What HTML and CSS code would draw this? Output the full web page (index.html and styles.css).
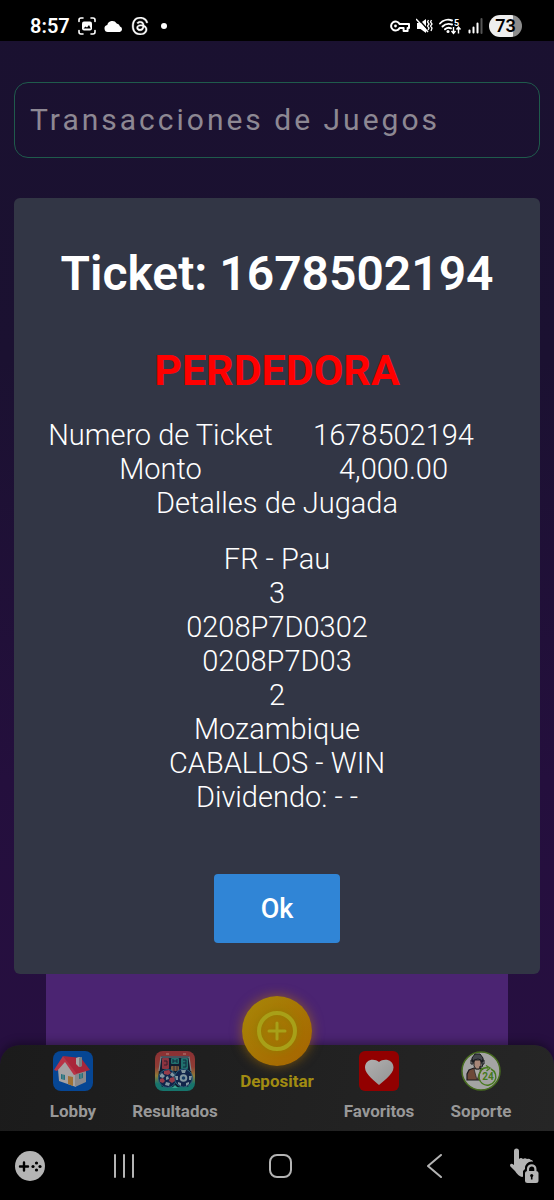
FILE: index.html
```html
<!DOCTYPE html>
<html lang="es">
<head>
  <meta charset="UTF-8" />
  <meta name="viewport" content="width=device-width, initial-scale=1.0"/>
  <title>Transacciones de Juegos</title>
  <link rel="stylesheet" href="styles.css">
</head>
<body>
  <!-- Barra de estado -->
  <header class="status-bar">
    <div class="status-left">
      <span class="time">8:57</span>
      <svg width="18" height="18" viewBox="0 0 18 18" fill="none" stroke="#fff" stroke-width="1.600" stroke-linecap="round" aria-hidden="true">
        <path d="M1 4.500V3a2 2 0 0 1 2-2h2M13 1h2a2 2 0 0 1 2 2v1.500M17 13.500v1.500a2 2 0 0 1-2 2h-2M5 17H3a2 2 0 0 1-2-2v-1.500"/>
        <rect x="4" y="4.500" width="10" height="9" rx="2" fill="#fff" stroke="none"/>
        <path d="M5.500 11.500l2-2 1.500 1 2-2.500 1.800 3.500z" fill="#000" stroke="none"/>
      </svg>
      <svg width="19" height="12" viewBox="0 0 19 12" fill="#fff" aria-hidden="true">
        <path d="M3.800 12A3.600 3.600 0 0 1 3.300 4.900 5.200 5.200 0 0 1 12.700 3.400 3.700 3.700 0 0 1 16 6.400 2.900 2.900 0 0 1 15.800 12z"/>
      </svg>
      <svg width="18" height="18" viewBox="0 0 24 24" fill="#fff" stroke="#fff" stroke-width=".5" aria-hidden="true">
        <path fill-rule="evenodd" d="M12.186 24h-.007c-3.581-.024-6.334-1.205-8.184-3.509C2.35 18.44 1.5 15.586 1.472 12.01v-.017c.03-3.579.879-6.43 2.525-8.482C5.845 1.205 8.6.024 12.18 0h.014c2.746.02 5.043.725 6.826 2.098 1.677 1.29 2.858 3.13 3.509 5.467l-2.04.569c-1.104-3.96-3.898-5.984-8.304-6.015-2.91.022-5.11.936-6.54 2.717C4.307 6.504 3.616 8.914 3.589 12c.027 3.086.718 5.496 2.057 7.164 1.43 1.783 3.631 2.698 6.54 2.717 2.623-.02 4.358-.631 5.8-2.045 1.647-1.613 1.618-3.593 1.09-4.798-.31-.71-.873-1.3-1.634-1.75-.192 1.352-.622 2.446-1.284 3.272-.886 1.102-2.14 1.704-3.73 1.79-1.202.065-2.361-.218-3.259-.801-1.063-.689-1.685-1.74-1.752-2.964-.065-1.19.408-2.285 1.33-3.082.88-.76 2.119-1.207 3.583-1.291a13.853 13.853 0 0 1 3.02.142c-.126-.742-.375-1.332-.75-1.757-.513-.586-1.308-.883-2.359-.89h-.029c-.844 0-1.992.232-2.721 1.32L7.734 7.847c.98-1.454 2.568-2.256 4.478-2.256h.044c3.194.02 5.097 1.975 5.287 5.388.108.046.216.094.321.142 1.49.7 2.58 1.761 3.154 3.07.797 1.82.871 4.79-1.548 7.158-1.85 1.81-4.094 2.628-7.277 2.65ZM13.2 12.1c-.25 0-.5.01-.75.02-1.84.1-2.98.95-2.92 2.16.07 1.26 1.46 1.85 2.8 1.78 1.22-.07 2.82-.55 3.09-3.72a10.500 10.500 0 0 0-2.220-.24z"/>
      </svg>
      <span class="dot"></span>
    </div>
    <div class="status-right">
      <svg width="20" height="14" viewBox="0 0 20 14" fill="none" stroke="#fff" stroke-width="2" stroke-linejoin="round" aria-hidden="true">
        <path d="M9.600 5H19V9H17.600V12H13.600V9H9.600A4.500 4.500 0 1 1 9.600 5z"/>
        <circle cx="5.500" cy="7" r="1.400" fill="#fff" stroke="none"/>
      </svg>
      <svg width="17" height="16" viewBox="0 0 17 16" aria-hidden="true">
        <path d="M1 5h3.500L10 1v14l-5.500-4H1z" fill="#fff"/>
        <path d="M1.500 0L13 13" stroke="#000" stroke-width="1.500"/>
        <path d="M0 1l12 13" stroke="#fff" stroke-width="1.500"/>
        <path d="M12.500 2l-1 2 1.500 2-1.500 2 1.500 2-1 2M15.500 2l-1 2 1.500 2-1.500 2 1.500 2-1 3" fill="none" stroke="#fff" stroke-width="1.300"/>
      </svg>
      <svg width="23" height="17" viewBox="0 0 23 17" aria-hidden="true">
        <g fill="none" stroke="#fff" stroke-width="1.900" stroke-linecap="round">
          <path d="M1 5.500C4 2 9 1 13 2.500M3.500 8.500C6 6 9.500 5.300 13 6.500M6 11.300c1.800-1.700 4-2 6-1"/>
        </g>
        <circle cx="9" cy="13.500" r="1.500" fill="#fff"/>
        <text class="wifi-gen" x="15" y="8">5</text>
        <path d="M14.500 9v6M12.500 13l2 2.500 2-2.500M19.500 15.500V9.500M17.500 11.500l2-2.500 2 2.500" fill="none" stroke="#fff" stroke-width="1.400"/>
      </svg>
      <svg width="15" height="16" viewBox="0 0 15 16" aria-hidden="true">
        <path d="M1.500 12.500v2M5.500 9.500v5M9.500 5.500v9" stroke="#fff" stroke-width="2" stroke-linecap="round"/>
        <path d="M13.500 1v14" stroke="#555" stroke-width="2" stroke-linecap="round"/>
      </svg>
      <span class="battery">73</span>
    </div>
  </header>

  <main class="page">
    <input class="page-title" type="text" value="Transacciones de Juegos" aria-label="Sección" readonly>

    <!-- Detalle del ticket -->
    <section class="ticket" role="dialog" aria-labelledby="ticket-title">
      <h2 class="ticket-title" id="ticket-title">Ticket: 1678502194</h2>
      <h3 class="ticket-result">PERDEDORA</h3>
      <table class="ticket-table">
        <tbody>
          <tr><th scope="row">Numero de Ticket</th><td>1678502194</td></tr>
          <tr><th scope="row">Monto</th><td>4,000.00</td></tr>
          <tr><th colspan="2">Detalles de Jugada</th></tr>
        </tbody>
      </table>
      <div class="ticket-play">
        <div>FR - Pau</div>
        <div>3</div>
        <div>0208P7D0302</div>
        <div>0208P7D03</div>
        <div>2</div>
        <div>Mozambique</div>
        <div>CABALLOS - WIN</div>
        <div>Dividendo: - -</div>
      </div>
      <button class="btn-ok" type="button">Ok</button>
    </section>

    <div class="panel"></div>
  </main>

  <!-- Menú inferior -->
  <nav class="tabs">
    <a class="tab" href="#lobby">
      <svg width="40" height="40" viewBox="0 0 40 40" aria-hidden="true">
        <rect width="40" height="40" rx="8" fill="#064694"/>
        <path d="M5 18l7-9 11 14v13L6 30z" fill="#a5a2a3"/>
        <path d="M22 22l11-4v13l-11 5z" fill="#8b898c"/>
        <path d="M10 5l18 2 9 12-14 4z" fill="#a9263a"/>
        <path d="M10 5l14 18-3 1-9-13-8 9-3-1z" fill="#b83346"/>
        <path d="M23 7l3-1 3 1v8l-3 1-3-3z" fill="#a5a5a5"/>
        <path d="M26 7l3-1v9l-3 1z" fill="#7d7d80"/>
        <path d="M15 25l5 1v9l-5-2z" fill="#a07236"/>
        <path d="M8 23l4 1v5l-4-1zM26 23l4-1v5l-4 1z" fill="#26717c"/>
        <path d="M10 23v5M28 22v5" stroke="#8fa3a6" stroke-width=".6"/>
      </svg>
      <span>Lobby</span>
    </a>
    <a class="tab" href="#resultados">
      <svg width="40" height="40" viewBox="0 0 40 40" aria-hidden="true">
        <defs>
          <linearGradient id="frame" x1="0" y1="0" x2="0" y2="1">
            <stop offset="0" stop-color="#8a3034"/>
            <stop offset=".4" stop-color="#8f3c34"/>
            <stop offset=".62" stop-color="#8f7c38"/>
            <stop offset=".82" stop-color="#16746c"/>
          </linearGradient>
        </defs>
        <rect width="40" height="40" rx="8" fill="url(#frame)"/>
        <path d="M6 5h28l3 22-4 9H7l-4-9z" fill="#101c30"/>
        <path d="M4 20L6 6h28l2 14" fill="none" stroke="#82878c" stroke-width="1.200"/>
        <rect x="7" y="7" width="7" height="11" rx="1" fill="#8c3440"/>
        <path d="M9 10h3v4H9" fill="none" stroke="#3b1c2c"/>
        <rect x="16" y="7" width="8" height="6" rx="1" fill="#20706d"/>
        <path d="M18 8v4M22 8v4M18 10h4" stroke="#102b40"/>
        <rect x="26" y="7" width="7" height="11" rx="1" fill="#20706d"/>
        <path d="M28 9h3v7h-3M28 12h3" fill="none" stroke="#102b40"/>
        <rect x="16" y="15" width="8" height="5" rx="1" fill="#80603d"/>
        <path d="M19 15v5M22 15v5" stroke="#33283a"/>
        <circle cx="12.500" cy="27.500" r="9" fill="#11244a" stroke="#295f79"/>
        <circle cx="28.500" cy="27" r="9" fill="#11244a" stroke="#295f79"/>
        <g fill="#963c49">
          <path d="M9 20l5-1 2 3-3 2-4-1zM15 27l4-1 1 4-3 2-3-2zM5 28l3-1 2 3-2 2-3-1z"/>
        </g>
        <g fill="#8296a0">
          <path d="M5 24l2-2 3 3-2 2-3-1zM17 21l3 3-2 2-3-2zM11 31l4 1-1 3-4-1zM11 26l2-1 1 3-3 1z"/>
          <circle cx="28.500" cy="27" r="3.800"/>
          <path d="M26 19h5l-1 3h-3zM20 25l3 0v4h-2zM34 25h3l-1 4h-2zM23 31l3 1v3l-3-2zM31 32l3-1v2l-3 2z"/>
        </g>
        <circle cx="28.500" cy="27" r="1.800" fill="#173c65"/>
        <path d="M17 37l3-3 3 3z" fill="#39a18f"/>
        <path d="M11 3h3M28 3h3" stroke="#b5867e"/>
      </svg>
      <span>Resultados</span>
    </a>
    <a class="tab tab-deposit" href="#depositar">
      <span class="deposit-circle">
        <svg width="40" height="40" viewBox="0 0 40 40" fill="none" stroke="#a8a018" aria-hidden="true">
          <circle cx="20" cy="20" r="18" stroke-width="4"/>
          <path d="M20 12v16M12 20h16" stroke-width="3" stroke-linecap="round"/>
        </svg>
      </span>
      <span>Depositar</span>
    </a>
    <a class="tab" href="#favoritos">
      <svg width="40" height="40" viewBox="0 0 40 40" aria-hidden="true">
        <defs>
          <linearGradient id="heart" x1="0" y1="0" x2="1" y2="1">
            <stop offset="0" stop-color="#b0b0b0"/>
            <stop offset="1" stop-color="#929292"/>
          </linearGradient>
        </defs>
        <rect width="40" height="40" rx="6" fill="#920000"/>
        <path d="M20 34C17 31 6 23.500 6 16.500C6 8.500 15 6.500 20 11C25 6.500 34.500 8.500 34.500 16.500C34.500 23.500 23 31 20 34z" fill="url(#heart)"/>
      </svg>
      <span>Favoritos</span>
    </a>
    <a class="tab" href="#soporte">
      <svg width="40" height="40" viewBox="0 0 40 40" aria-hidden="true">
        <circle cx="20" cy="20" r="19" fill="#a4a4a4" stroke="#466b1f" stroke-width="1.500"/>
        <path d="M6 29v-6l2-4 5-2h6l5 3v9z" fill="#6e4938" stroke="#1d1a1f" stroke-width="1.200"/>
        <path d="M13 18l3 11 4-11z" fill="#a9a7a5" stroke="#222" stroke-width=".7"/>
        <path d="M13 9h7v6l-2 3h-3l-2-3z" fill="#a78678" stroke="#222"/>
        <path d="M11 11V7l3-4h5l3 4v4h-2V9l-3-1-4 1v2z" fill="#44474d" stroke="#17181c"/>
        <path d="M10 9h2v4h-2zM21 9h2v4h-2zM22 13l-1 3h-3" fill="none" stroke="#17181c"/>
        <circle cx="27" cy="25.500" r="8.500" fill="#a4a4a4"/>
        <path d="M30 18a8.500 8.500 0 1 1-10 2M19 20q3-4 8-3M25 14.500l4 2.500-3.500 3" fill="none" stroke="#467a1c" stroke-width="1.400"/>
        <text class="hours" x="27" y="29">24</text>
      </svg>
      <span>Soporte</span>
    </a>
  </nav>

  <!-- Barra de navegación del teléfono -->
  <footer class="phone-nav">
    <button type="button" aria-label="Juegos">
      <svg width="30" height="30" viewBox="0 0 30 30">
        <circle cx="15" cy="15" r="15" fill="#b4b4b4"/>
        <path d="M9 11.500v8M5 15.500h8" stroke="#000" stroke-width="2.400" stroke-linecap="round"/>
        <g fill="#000"><circle cx="21.500" cy="12" r="1.600"/><circle cx="21.500" cy="19" r="1.600"/><circle cx="18" cy="15.500" r="1.600"/><circle cx="25" cy="15.500" r="1.600"/></g>
      </svg>
    </button>
    <div class="phone-keys">
      <button type="button" aria-label="Recientes">
        <svg width="22" height="24" viewBox="0 0 22 24" stroke="#b4b4b4" stroke-width="2" stroke-linecap="round">
          <path d="M3 1v22M12 1v22M21 1v22"/>
        </svg>
      </button>
      <button type="button" aria-label="Inicio">
        <svg width="24" height="26" viewBox="0 0 24 26" fill="none" stroke="#b4b4b4" stroke-width="2">
          <rect x="1" y="2" width="21" height="22" rx="7"/>
        </svg>
      </button>
      <button type="button" aria-label="Atrás">
        <svg width="15" height="24" viewBox="0 0 15 24" fill="none" stroke="#b4b4b4" stroke-width="2" stroke-linecap="round" stroke-linejoin="round">
          <path d="M14 1L1 12l13 11"/>
        </svg>
      </button>
    </div>
    <button type="button" aria-label="Bloquear pantalla táctil">
      <svg width="30" height="36" viewBox="0 0 30 36">
        <path d="M5 3a2.500 2.500 0 0 1 5 0v8q2-2 4 0 2-1.500 4 0 2-1 4 1 2-.5 2 3v10L13 29q-4-1-7-6l-5-5q0-4 4-1z" fill="#b4b4b4"/>
        <path d="M14 31v-8l2-2v-1a6 6 0 0 1 13 0v1l1 2v12H14z" fill="#000"/>
        <rect x="16" y="23" width="13.500" height="12" rx="2.500" fill="#b4b4b4"/>
        <path d="M19 23v-2a3.700 3.700 0 0 1 7.400 0v2" fill="none" stroke="#b4b4b4" stroke-width="2.200"/>
        <circle cx="22.700" cy="27.500" r="1.600" fill="#000"/>
        <path d="M22.700 28v3.500" stroke="#000" stroke-width="1.600"/>
      </svg>
    </button>
  </footer>
</body>
</html>
```
FILE: styles.css
```css
* {
  box-sizing: border-box;
}
body {
  margin: 0;
  min-height: 100vh;
  display: flex;
  flex-direction: column;
  background: linear-gradient(#1a1130 0%, #1b1131 30%, #240f3d 65%, #280f42 100%);
  font-family: Roboto, sans-serif;
  color: #fff;
}
button {
  padding: 0;
  border: none;
  background: none;
  font-family: inherit;
  cursor: pointer;
}
svg {
  display: block;
}

/* Barra de estado */
.status-bar {
  display: flex;
  justify-content: space-between;
  padding: 11px 32px 0 30px;
  height: 41px;
  background: #000;
}
.status-left,
.status-right {
  display: flex;
  align-items: center;
  gap: 8px;
}
.status-right {
  gap: 6px;
}
.time {
  font-size: 20px;
  font-weight: 600;
}
.dot {
  width: 6px;
  height: 6px;
  margin-left: 4px;
  border-radius: 50%;
  background: #fff;
}
.wifi-gen {
  font-size: 9px;
  font-weight: 700;
  fill: #fff;
}
.battery {
  width: 33px;
  height: 22px;
  border-radius: 11px;
  background: linear-gradient(90deg, #eee 73%, #8c8c8c 73%);
  color: #000;
  font-size: 18px;
  font-weight: 600;
  line-height: 22px;
  text-align: center;
}

/* Contenido */
.page {
  flex: 1;
  display: flex;
  flex-direction: column;
  padding: 41px 14px 0;
}
.page-title {
  width: 100%;
  height: 76px;
  margin-bottom: 40px;
  padding: 0 15px 2px;
  border: 1px solid #1f5b4c;
  border-radius: 14px;
  outline: none;
  background: transparent;
  color: #8d8893;
  font-family: inherit;
  font-size: 30px;
  letter-spacing: 3px;
}
.ticket {
  padding: 48px 30px 31px;
  border-radius: 6px;
  background: #323645;
  text-align: center;
  font-size: 29px;
  font-weight: 300;
  line-height: 34px;
}
.ticket-title {
  margin: 0 0 42px;
  font-size: 48px;
  font-weight: 600;
  line-height: 56px;
}
.ticket-result {
  margin: 0 0 22px;
  color: #f00;
  font-size: 43px;
  font-weight: 700;
  line-height: 52px;
}
.ticket-table {
  width: 100%;
  margin-bottom: 22px;
  table-layout: fixed;
  border-collapse: collapse;
}
.ticket-table th,
.ticket-table td {
  padding: 0;
  font-weight: 300;
  white-space: nowrap;
}
.btn-ok {
  margin-top: 60px;
  padding: 0 47px;
  height: 69px;
  border-radius: 4px;
  background: #3085d6;
  color: #fff;
  font-size: 27px;
  font-weight: 500;
}
.panel {
  flex: 1;
  margin: 0 32px;
  background: #4b2472;
}

/* Menú inferior */
.tabs {
  display: grid;
  grid-template-columns: repeat(5, 1fr);
  height: 86px;
  padding: 0 22px;
  border-radius: 20px 20px 0 0;
  background: linear-gradient(100deg, #1b1b1b, #262626);
  box-shadow: 0 -2px 10px rgba(0, 0, 0, 0.4);
}
.tab {
  display: flex;
  flex-direction: column;
  align-items: center;
  gap: 10px;
  padding-top: 6px;
  color: #989898;
  font-size: 17px;
  font-weight: 700;
  line-height: 20px;
  text-decoration: none;
}
.tab-deposit {
  gap: 5px;
  margin-top: -49px;
  padding-top: 0;
  color: #a18c12;
}
.deposit-circle {
  display: flex;
  align-items: center;
  justify-content: center;
  width: 70px;
  height: 70px;
  border-radius: 50%;
  background: linear-gradient(135deg, #a78708, #a66300);
  box-shadow: 0 0 12px rgba(180, 120, 0, 0.6);
}
.deposit-circle svg {
  filter: drop-shadow(0 0 3px #8f7b00);
}
.hours {
  fill: #467a1c;
  font-size: 10px;
  font-weight: 700;
  text-anchor: middle;
}

/* Barra del teléfono */
.phone-nav {
  display: flex;
  align-items: center;
  gap: 67px;
  height: 69px;
  padding: 0 15px;
  background: #000;
}
.phone-keys {
  flex: 1;
  display: flex;
  align-items: center;
  justify-content: space-between;
}
```
